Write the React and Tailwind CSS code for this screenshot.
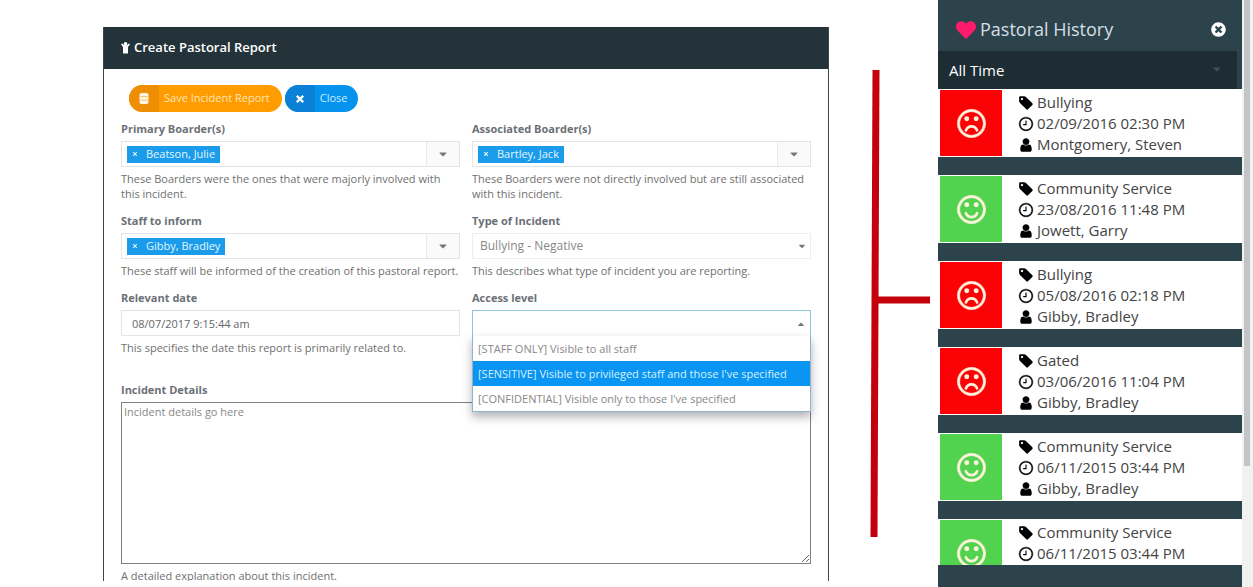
import { FaTimes, FaHeart, FaTimesCircle, FaCaretDown, FaCaretUp } from "react-icons/fa";

const RING =
  "M1536 896q0-130-51-248.5t-136.5-204-204-136.5-248.5-51-248.5 51-204 136.5-136.5 204-51 248.5 51 248.5 136.5 204 204 136.5 248.5 51 248.5-51 204-136.5 136.5-204 51-248.5zm128 0q0 209-103 385.5t-279.5 279.5-385.5 103-385.5-103-279.5-279.5-103-385.5 103-385.5 279.5-279.5 385.5-103 385.5 103 279.5 279.5 103 385.5z";
const TAG =
  "M576 448q0-53-37.5-90.5t-90.5-37.5-90.5 37.5-37.5 90.5 37.5 90.5 90.5 37.5 90.5-37.5 37.5-90.5zm1067 576q0 53-37 90l-491 492q-39 37-91 37-53 0-90-37l-715-716q-38-37-64.5-101t-26.5-117v-416q0-52 38-90t90-38h416q53 0 117 26.5t102 64.5l715 714q37 39 37 91z";
const USER =
  "M1536 1399q0 109-62.5 187t-150.5 78h-854q-88 0-150.5-78t-62.5-187q0-85 8.5-160.5t31.5-152 58.5-131 94-89 134.5-34.5q131 128 313 128t313-128q76 0 134.5 34.5t94 89 58.5 131 31.5 152 8.5 160.5zm-256-887q0 159-112.5 271.5t-271.5 112.5-271.5-112.5-112.5-271.5 112.5-271.5 271.5-112.5 271.5 112.5 112.5 271.5z";

function Glyph({ children }) {
  return (
    <svg viewBox="0 0 1792 1792" className="size-4 shrink-0 fill-black" aria-hidden="true">
      {children}
    </svg>
  );
}

function Face({ happy }) {
  return (
    <svg viewBox="0 0 1792 1792" className="size-[33px] fill-[#fff3dc]" aria-hidden="true">
      <path d={RING} stroke="#fff3dc" strokeWidth="30" />
      <circle cx="640" cy="640" r="135" />
      <circle cx="1152" cy="640" r="135" />
      <path
        d={happy ? "M591 1100Q680 1310 896 1310T1201 1100" : "M591 1270Q680 1050 896 1050T1201 1270"}
        fill="none"
        stroke="#fff3dc"
        strokeWidth="145"
        strokeLinecap="round"
      />
    </svg>
  );
}

function ChildIcon() {
  return (
    <svg viewBox="0 0 9 12" className="h-3 w-[9px] fill-white" aria-hidden="true">
      <circle cx="4.5" cy="2" r="1.9" />
      <path d="M0 2.2L1.1 1.4L3 3.2H6L7.9 1.4L9 2.2L7 5V11.5H2V5Z" />
    </svg>
  );
}

function DatabaseIcon() {
  return (
    <svg viewBox="0 0 10 11" className="h-[11px] w-[10px]" aria-hidden="true">
      <rect x="0.5" y="0" width="9" height="11" rx="2" fill="#fff8e8" />
      <path d="M1 3.6H9M1 7.2H9" stroke="#f5b04a" strokeWidth="0.8" />
    </svg>
  );
}

const history = [
  { type: "Bullying", date: "02/09/2016 02:30 PM", who: "Montgomery, Steven", happy: false },
  { type: "Community Service", date: "23/08/2016 11:48 PM", who: "Jowett, Garry", happy: true },
  { type: "Bullying", date: "05/08/2016 02:18 PM", who: "Gibby, Bradley", happy: false },
  { type: "Gated", date: "03/06/2016 11:04 PM", who: "Gibby, Bradley", happy: false },
  { type: "Community Service", date: "06/11/2015 03:44 PM", who: "Gibby, Bradley", happy: true },
  { type: "Community Service", date: "06/11/2015 03:44 PM", who: null, happy: true },
];

function Field({ id, label, help, children }) {
  return (
    <div className="min-w-0">
      <label htmlFor={id} className="mb-1 block text-[11px] leading-4 font-bold text-[#6b7077]">
        {label}
      </label>
      {children}
      <p className="mt-1 text-[11px] leading-[15px] text-[#6f6f6f]">{help}</p>
    </div>
  );
}

function TagBox({ id, name }) {
  return (
    <div className="flex h-[26px] border border-[#e2e4e6]">
      <div className="flex flex-1 items-center pl-[5px]">
        <span className="flex h-[17px] items-center gap-2 bg-[#1a9cea] px-[5px] text-[11px] text-[#e4f5ff]">
          <button type="button" aria-label={"Remove " + name}>
            <FaTimes className="size-[6px]" />
          </button>
          {name}
        </span>
      </div>
      <button
        id={id}
        type="button"
        className="flex w-[33px] items-center justify-center border-l border-[#e9ebec] bg-[#fafafa] text-[#777]"
      >
        <FaCaretDown className="size-3" />
      </button>
    </div>
  );
}

function ReportForm() {
  return (
    <section className="flex min-w-0 flex-1 flex-col overflow-hidden border-x border-[#3c474c]">
      <h1 className="flex h-[42px] shrink-0 items-center gap-1 bg-[#24323a] pl-[17px] text-[13px] font-semibold text-white">
        <ChildIcon />
        Create Pastoral Report
      </h1>
      <form className="px-[17px] pt-4">
        <div className="mb-[9px] flex gap-[3px] pl-2 text-[11px]">
          <button type="button" className="flex h-[27px] overflow-hidden rounded-full bg-[#ff9c00] text-[#ffe6b8]">
            <span className="flex h-full w-[30px] items-center justify-center bg-[#ee8e04]">
              <DatabaseIcon />
            </span>
            <span className="flex h-full items-center pr-3 pl-[5px]">Save Incident Report</span>
          </button>
          <button type="button" className="flex h-[27px] overflow-hidden rounded-full bg-[#0593ee] text-[#c9ecff]">
            <span className="flex h-full w-[30px] items-center justify-center bg-[#0a80d6] text-white">
              <FaTimes className="size-[10px] stroke-white stroke-[40px]" />
            </span>
            <span className="flex h-full items-center pr-[11px] pl-[5px]">Close</span>
          </button>
        </div>
        <div className="grid grid-cols-2 gap-3">
          <Field
            id="primary"
            label="Primary Boarder(s)"
            help="These Boarders were the ones that were majorly involved with this incident."
          >
            <TagBox id="primary" name="Beatson, Julie" />
          </Field>
          <Field
            id="associated"
            label="Associated Boarder(s)"
            help="These Boarders were not directly involved but are still associated with this incident."
          >
            <TagBox id="associated" name="Bartley, Jack" />
          </Field>
          <Field id="staff" label="Staff to inform" help="These staff will be informed of the creation of this pastoral report.">
            <TagBox id="staff" name="Gibby, Bradley" />
          </Field>
          <Field id="type" label="Type of Incident" help="This describes what type of incident you are reporting.">
            <div className="relative">
              <select
                id="type"
                className="block h-[26px] w-full appearance-none border border-[#eceeef] bg-white pl-[7px] text-[12px] text-[#888]"
              >
                <option>Bullying - Negative</option>
              </select>
              <FaCaretDown className="pointer-events-none absolute top-2 right-1 size-[10px] text-[#777]" />
            </div>
          </Field>
          <Field id="date" label="Relevant date" help="This specifies the date this report is primarily related to.">
            <input
              id="date"
              type="text"
              defaultValue="08/07/2017 9:15:44 am"
              className="block h-[26px] w-full border border-[#e2e4e6] pl-[10px] text-[11px] text-[#666]"
            />
          </Field>
          <div className="relative">
            <label id="access-label" htmlFor="access" className="mb-1 block text-[11px] leading-4 font-bold text-[#6b7077]">
              Access level
            </label>
            <button
              id="access"
              type="button"
              role="combobox"
              aria-expanded="true"
              aria-controls="access-list"
              aria-labelledby="access-label"
              className="flex h-[26px] w-full items-center justify-end border border-b-0 border-[#8fc4dc] bg-white pr-1 text-[#777]"
            >
              <FaCaretUp className="size-[10px]" />
            </button>
            <ul
              id="access-list"
              role="listbox"
              aria-labelledby="access-label"
              className="absolute inset-x-0 top-[46px] z-10 border border-t-0 border-[#8fb4c8] bg-white text-[11px] leading-[25px] text-[#888] shadow-[0_5px_9px_rgba(60,60,80,0.4)]"
            >
              <li role="option" aria-selected="false" className="pl-[5px]">
                [STAFF ONLY] Visible to all staff
              </li>
              <li role="option" aria-selected="true" className="bg-[#0a95f2] pl-[5px] text-[#d8f0ff]">
                [SENSITIVE] Visible to privileged staff and those I've specified
              </li>
              <li role="option" aria-selected="false" className="pl-[5px]">
                [CONFIDENTIAL] Visible only to those I've specified
              </li>
            </ul>
          </div>
        </div>
        <div className="mt-[27px]">
          <Field id="details" label="Incident Details" help="A detailed explanation about this incident.">
            <textarea
              id="details"
              placeholder="Incident details go here"
              className="block h-[162px] w-full border border-[#808080] px-[2px] text-[11px] leading-[18px] placeholder:text-[#888]"
            />
          </Field>
        </div>
      </form>
    </section>
  );
}

function Connector() {
  return (
    <svg viewBox="0 0 109 587" className="h-[587px] w-[109px] shrink-0" aria-hidden="true">
      <g stroke="#c4000c" strokeWidth="7">
        <path d="M47 70L45 537" />
        <path d="M46 300H101" />
      </g>
    </svg>
  );
}

function HistoryPanel() {
  return (
    <aside className="flex w-[304px] shrink-0 flex-col bg-[#2c434c] pb-[22px] text-[15px]">
      <header className="flex h-[51px] shrink-0 items-center gap-1 pt-2 pr-4 pl-[18px]">
        <FaHeart className="size-5 text-[#ff1a6c]" />
        <h2 className="flex-1 text-[18px] text-[#d5dfe4]">Pastoral History</h2>
        <button type="button" aria-label="Close history" className="text-white">
          <FaTimesCircle className="size-[15px]" />
        </button>
      </header>
      <div className="relative mr-[5px] shrink-0">
        <select
          aria-label="Period"
          className="block h-[38px] w-full appearance-none bg-[#1e2d33] pl-[11px] text-[15px] font-medium text-white"
        >
          <option>All Time</option>
        </select>
        <FaCaretDown className="pointer-events-none absolute top-3 right-[14px] size-3 text-[#3f525a]" />
      </div>
      <ul className="flex min-h-0 flex-1 flex-col gap-[18px] overflow-hidden">
        {history.map((item, i) => (
          <li key={i} className="flex h-[68px] shrink-0 gap-4 bg-white py-px pl-[2px]">
            <div className={"flex w-[62px] items-center justify-center " + (item.happy ? "bg-[#52d34f]" : "bg-[#fb0207]")}>
              <Face happy={item.happy} />
            </div>
            <div className="pt-[2px] leading-[21px] text-[#444]">
              <p className="flex items-center gap-[3px]">
                <Glyph>
                  <path d={TAG} />
                </Glyph>
                {item.type}
              </p>
              <p className="flex items-center gap-[3px]">
                <Glyph>
                  <path d={RING} stroke="black" strokeWidth="50" />
                  <path d="M960 544v448q0 32-32 32h-320q-32 0-32-32v-64q0-32 32-32h224v-352q0-32 32-32h64q32 0 32 32z" />
                </Glyph>
                {item.date}
              </p>
              {item.who && (
                <p className="flex items-center gap-[3px]">
                  <Glyph>
                    <path d={USER} />
                  </Glyph>
                  {item.who}
                </p>
              )}
            </div>
          </li>
        ))}
      </ul>
    </aside>
  );
}

export default function App() {
  return (
    <div className="flex h-screen overflow-hidden bg-white font-['Open_Sans',sans-serif]">
      <main className="flex min-w-0 flex-1 pt-[27px] pb-[6px] pl-[103px]">
        <ReportForm />
      </main>
      <Connector />
      <HistoryPanel />
      <div className="w-[11px] shrink-0 bg-[#f1f1f1] pr-[3px] pl-[2px]">
        <div className="h-[466px] bg-[#c3c4c6]" />
      </div>
    </div>
  );
}
